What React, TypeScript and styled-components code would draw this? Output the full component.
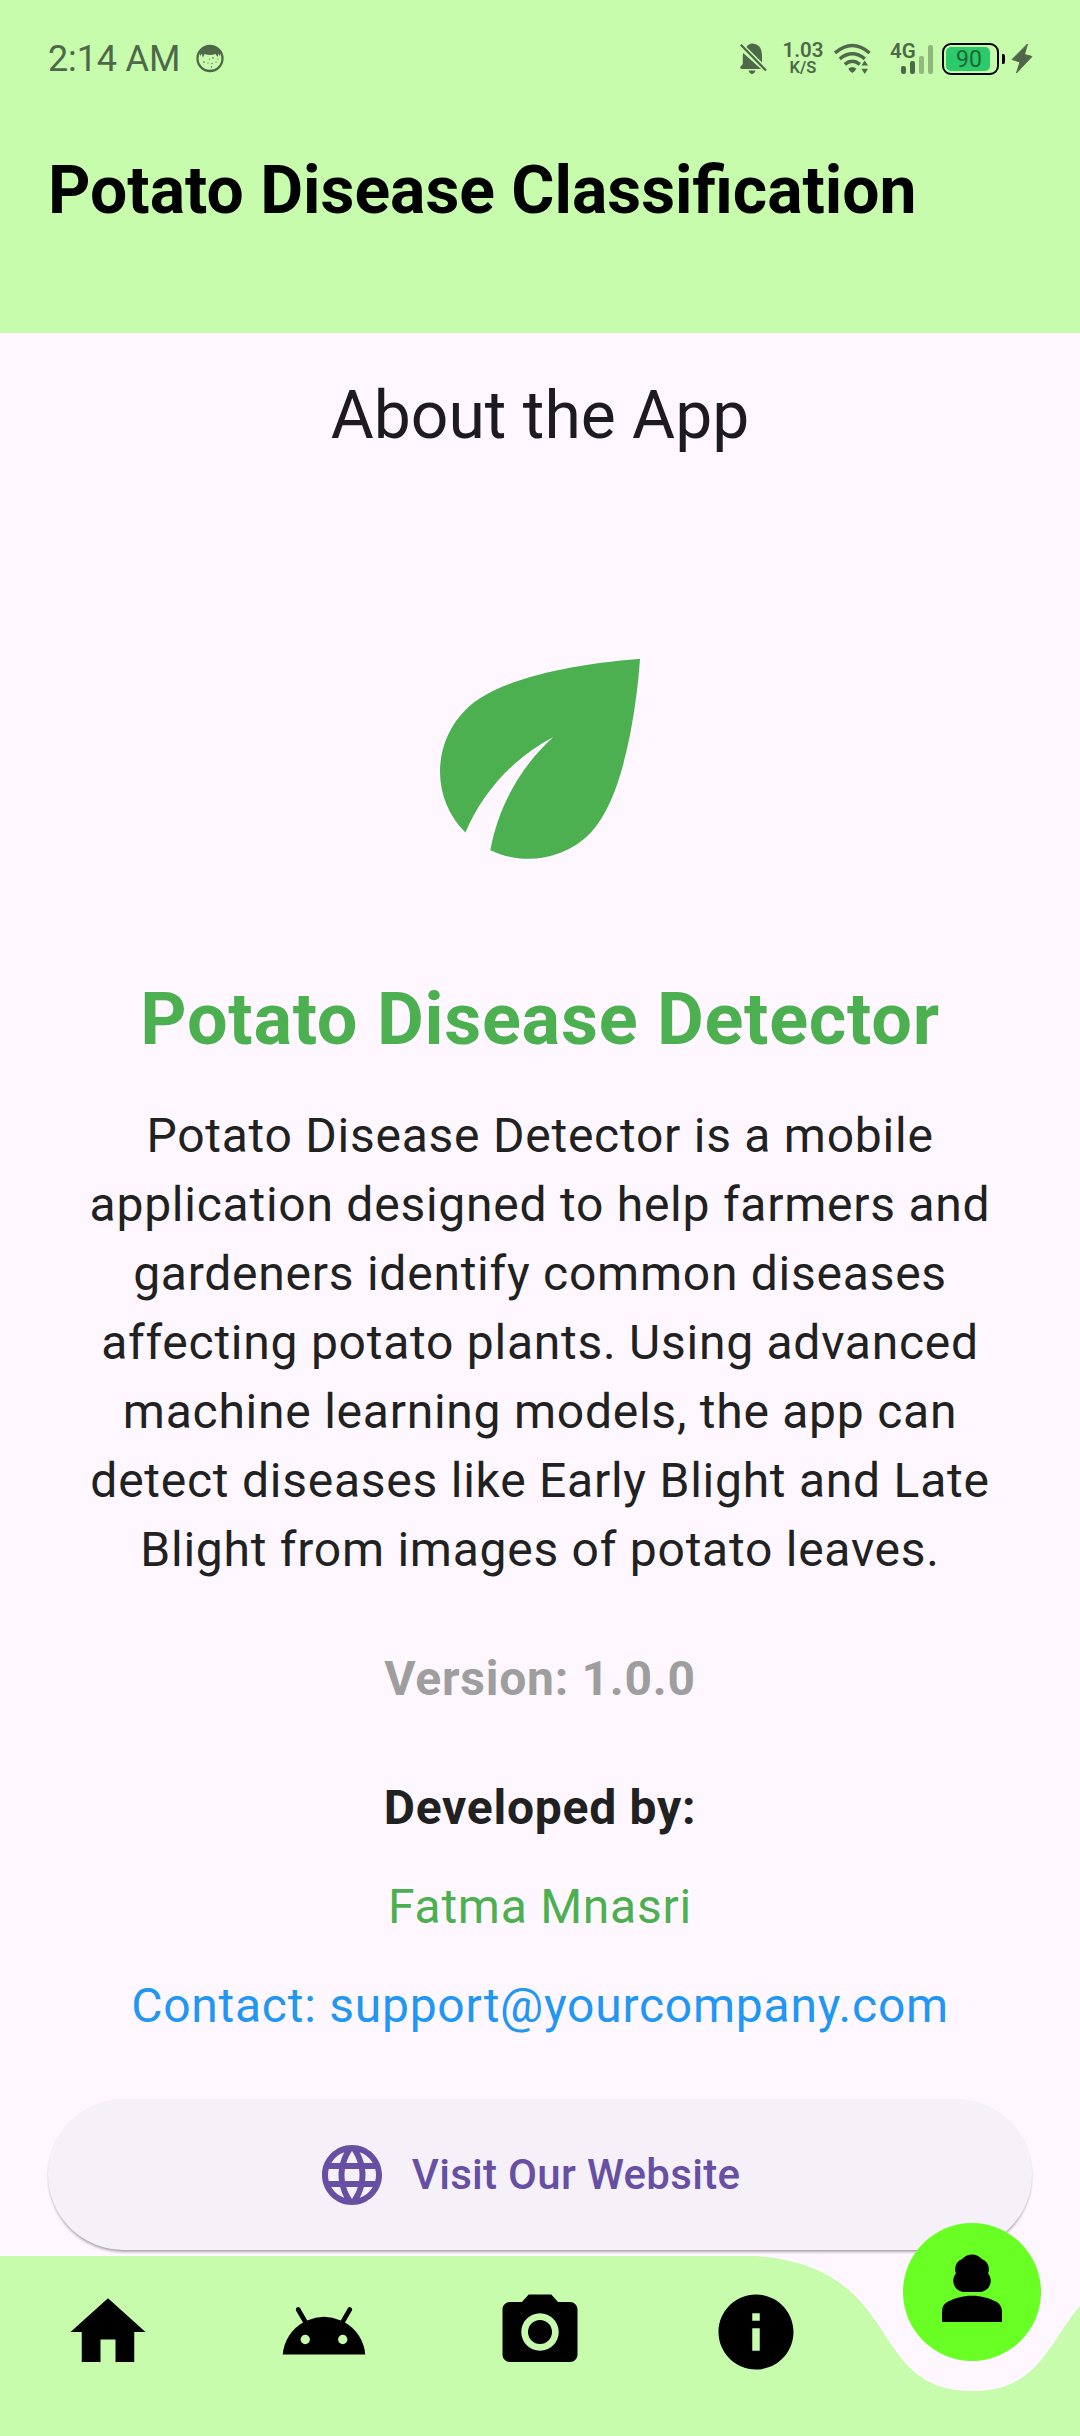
import React from "react";
import styled, { createGlobalStyle } from "styled-components";
import { MdAndroid, MdCameraAlt, MdHome, MdInfo, MdLanguage, MdPerson3 } from "react-icons/md";

const GlobalStyle = createGlobalStyle`
  * { box-sizing: border-box; }
  body { margin: 0; background: #fef7ff; font-family: Roboto, "Noto Sans", sans-serif; }
  svg { display: block; }
`;

const muted = "#50684a";
const mint = "#c6fcac";

const Screen = styled.div`
  width: 1080px;
  height: 2436px;
  display: flex;
  flex-direction: column;
  background: #fef7ff;
  overflow: hidden;
`;

const Header = styled.header`
  height: 333px;
  flex: none;
  background: ${mint};
`;

const StatusBar = styled.div`
  height: 117px;
  padding: 0 47px 0 48px;
  display: flex;
  align-items: center;
  color: ${muted};
`;

const Clock = styled.span`
  font-size: 36px;
  line-height: 42px;
  letter-spacing: -0.15px;
  margin: 1px 16px 0 0;
`;

const StatusIcons = styled.div`
  display: flex;
  align-items: center;
  margin-left: auto;
`;

const NetSpeed = styled.div`
  display: flex;
  flex-direction: column;
  align-items: center;
  width: 40px;
  margin: 0 11px 0 16px;
  font-weight: 600;
`;

const SpeedValue = styled.span`
  font-size: 20.5px;
  line-height: 18px;
`;

const SpeedUnit = styled.span`
  font-size: 16.5px;
  line-height: 17px;
`;

const Signal = styled.div`
  position: relative;
  width: 43px;
  height: 36px;
  margin: 0 9px 0 19px;
`;

const NetworkType = styled.span`
  position: absolute;
  left: 0;
  top: 0;
  font-size: 20.5px;
  line-height: 20px;
  font-weight: 600;
`;

const SignalBars = styled.svg`
  position: absolute;
  left: 11px;
  top: 4px;
`;

const Battery = styled.div`
  width: 57px;
  height: 32px;
  border: 2px solid #000;
  border-radius: 9px;
  padding: 2px;
`;

const BatteryLevel = styled.div`
  width: 44px;
  height: 24px;
  border-radius: 5px;
  background: #2bca6b;
  color: #1d6637;
  font-size: 23px;
  line-height: 25px;
  padding-left: 10px;
`;

const BatteryTip = styled.div`
  width: 3px;
  height: 10px;
  margin: 0 6px 0 3px;
  border-radius: 0 2px 2px 0;
  background: #000;
`;

const AppTitle = styled.h1`
  margin: 35px 0 0 48px;
  font-size: 66px;
  line-height: 77px;
  font-weight: 700;
  color: #000;
`;

const Content = styled.main`
  flex: 1;
  min-height: 0;
  padding: 0 48px;
  display: flex;
  flex-direction: column;
  align-items: center;
  text-align: center;
`;

const PageTitle = styled.h2`
  margin: 41px 0 0;
  font-size: 66px;
  line-height: 84px;
  font-weight: 400;
  color: #1d1b20;
`;

const LeafIcon = styled.svg`
  flex: none;
  width: 300px;
  height: 300px;
  margin-top: 151px;
  fill: #4caf50;
`;

const AppName = styled.h3`
  margin: 59px 0 0;
  font-size: 72px;
  line-height: 103px;
  font-weight: 700;
  letter-spacing: 0.75px;
  color: #4caf50;
`;

const Description = styled.p`
  margin: 30px 0;
  font-size: 48px;
  line-height: 69px;
  letter-spacing: 0.75px;
  color: #212121;
`;

const Line = styled.p<{ $color: string; $bold?: boolean; $gap?: number }>`
  margin: ${(p) => p.$gap ?? 30}px 0 0;
  font-size: 48px;
  line-height: 69px;
  letter-spacing: 0.75px;
  font-weight: ${(p) => (p.$bold ? 700 : 400)};
  color: ${(p) => p.$color};
`;

const WebsiteButton = styled.button`
  flex: none;
  align-self: stretch;
  height: 151px;
  margin-top: 59px;
  border: 0;
  border-radius: 76px;
  display: flex;
  align-items: center;
  justify-content: center;
  gap: 24px;
  padding: 1px 24px 0 0;
  background: #f6f1f9;
  color: #6750a4;
  font: 500 42px/60px Roboto, sans-serif;
  letter-spacing: 0.3px;
  box-shadow: 0 3px 3px -1px rgba(0, 0, 0, 0.3), 0 1px 2px rgba(0, 0, 0, 0.08);
`;

const NavBar = styled.nav`
  position: relative;
  flex: none;
  height: 180px;
  display: grid;
  grid-template-columns: repeat(5, 216px);
`;

const NavShape = styled.svg`
  position: absolute;
  inset: 0;
`;

const NavItem = styled.a`
  position: relative;
  display: flex;
  align-items: center;
  justify-content: center;
  padding-bottom: 28px;
  color: #000;
`;

const ActiveItem = styled(NavItem)`
  width: 138px;
  height: 138px;
  margin: -33px auto 0;
  padding: 0;
  border-radius: 50%;
  background: #69ff24;
`;

const FaceIcon = () => (
  <svg width="28" height="30" viewBox="0 0 28 30">
    <circle cx="14" cy="14.500" r="12.500" fill="none" stroke={muted} strokeWidth="2.300" />
    <path
      d="M3.500 8 C7 0.500 21 0.500 24.500 8 L23.500 12.500 L22.500 9.500 L21.500 13 L19.500 10 Q14 12 8.500 10 L7 13.500 L5.500 9.500 L4.500 12.500Z"
      fill={muted}
    />
    <g fill={muted}>
      <circle cx="8" cy="18" r="0.8" />
      <circle cx="12" cy="19" r="0.6" />
      <circle cx="17" cy="14" r="0.8" />
      <circle cx="20" cy="18" r="0.6" />
      <circle cx="16" cy="19.500" r="0.7" />
      <circle cx="15.500" cy="23" r="0.7" />
      <circle cx="13.500" cy="15" r="0.6" />
      <circle cx="22" cy="15" r="0.6" />
    </g>
  </svg>
);

const BellOffIcon = () => (
  <svg width="28" height="32" viewBox="0 0 28 32" fill={muted}>
    <path d="M4.200 10 L22 26 H3 Q0.800 26 1.200 24 L3.800 21 V14 Q3.600 12 4.200 10Z" />
    <path d="M7.500 4 Q9.500 0.800 13.500 0.600 Q22.800 1.500 23 12 V19.500Z" />
    <path d="M9.500 27.600 H16.500 Q15.500 31 13 31 Q10.500 31 9.500 27.600Z" />
    <path d="M3.800 2.200 L28 26.500" stroke={mint} strokeWidth="1.600" />
    <path d="M1.800 1.800 L27 27.500" stroke={muted} strokeWidth="2.300" />
  </svg>
);

const WifiIcon = () => (
  <svg width="37" height="32" viewBox="0 0 37 32">
    <g fill="none" stroke={muted} strokeWidth="3.500">
      <path d="M1 10 Q18.300 -5 35.600 10" />
      <path d="M5.800 15.800 Q18.300 5.800 30.800 15.800" />
      <path d="M10.800 21.300 Q18.300 15.300 25.800 21.300" />
    </g>
    <path d="M14.300 25.500 Q18.300 22.500 22.300 25.500 Q21.500 28 18.300 30 Q15 28 14.300 25.500Z" fill={muted} />
    <path d="M27.500 22.500 L30.700 17.500 L34 22.500Z M27.500 25.800 H34 L30.700 31Z" fill={muted} />
  </svg>
);

const BoltIcon = () => (
  <svg width="22" height="31" viewBox="0 0 22 31">
    <path
      d="M16.500 1 L1 16.500 L9 19 L5.500 30 L21 13.500 L13.500 11.500Z"
      fill={muted}
      stroke={muted}
      strokeLinejoin="round"
    />
  </svg>
);

export default function App() {
  return (
    <>
      <GlobalStyle />
      <Screen>
        <Header>
          <StatusBar>
            <Clock>2:14 AM</Clock>
            <FaceIcon />
            <StatusIcons>
              <BellOffIcon />
              <NetSpeed>
                <SpeedValue>1.03</SpeedValue>
                <SpeedUnit>K/S</SpeedUnit>
              </NetSpeed>
              <WifiIcon />
              <Signal>
                <NetworkType>4G</NetworkType>
                <SignalBars width="33" height="30" viewBox="0 0 33 30" fill={muted}>
                  <rect x="0" y="21" width="5" height="8" rx="2" />
                  <rect x="9" y="16" width="5" height="13" rx="2" />
                  <rect x="18" y="11" width="5" height="18" rx="2" opacity="0.45" />
                  <rect x="27" y="0" width="5" height="29" rx="2" opacity="0.45" />
                </SignalBars>
              </Signal>
              <Battery>
                <BatteryLevel>90</BatteryLevel>
              </Battery>
              <BatteryTip />
              <BoltIcon />
            </StatusIcons>
          </StatusBar>
          <AppTitle>Potato Disease Classification</AppTitle>
        </Header>
        <Content>
          <PageTitle>About the App</PageTitle>
          <LeafIcon viewBox="0 0 24 24">
            <path d="M6.050 8.050c-2.730 2.730-2.730 7.150-.02 9.830 1.450-3.380 4.020-6.080 7.040-7.640-2.600 2.350-4.400 5.500-5.040 9.060 2.600 1.230 5.820.8 7.970-1.350C19.430 14.470 20 4 20 4S9.530 4.570 6.050 8.050z" />
          </LeafIcon>
          <AppName>Potato Disease Detector</AppName>
          <Description>
            Potato Disease Detector is a mobile application designed to help farmers and gardeners identify common
            diseases affecting potato plants. Using advanced machine learning models, the app can detect diseases like
            Early Blight and Late Blight from images of potato leaves.
          </Description>
          <Line $color="#9e9e9e" $bold>Version: 1.0.0</Line>
          <Line $color="#212121" $bold $gap={60}>Developed by:</Line>
          <Line $color="#4caf50">Fatma Mnasri</Line>
          <Line $color="#2196f3">Contact: support@yourcompany.com</Line>
          <WebsiteButton>
            <MdLanguage size={72} />
            Visit Our Website
          </WebsiteButton>
        </Content>
        <NavBar>
          <NavShape width="1080" height="180" viewBox="0 0 1080 180">
            <path d="M0 0H756C907.2 11.250 864 135 972 135C1080 135 1036.800 11.250 1188 0V180H0Z" fill={mint} />
          </NavShape>
          <NavItem><MdHome size={90} /></NavItem>
          <NavItem><MdAndroid size={90} /></NavItem>
          <NavItem><MdCameraAlt size={90} /></NavItem>
          <NavItem><MdInfo size={90} /></NavItem>
          <ActiveItem><MdPerson3 size={90} /></ActiveItem>
        </NavBar>
      </Screen>
    </>
  );
}
